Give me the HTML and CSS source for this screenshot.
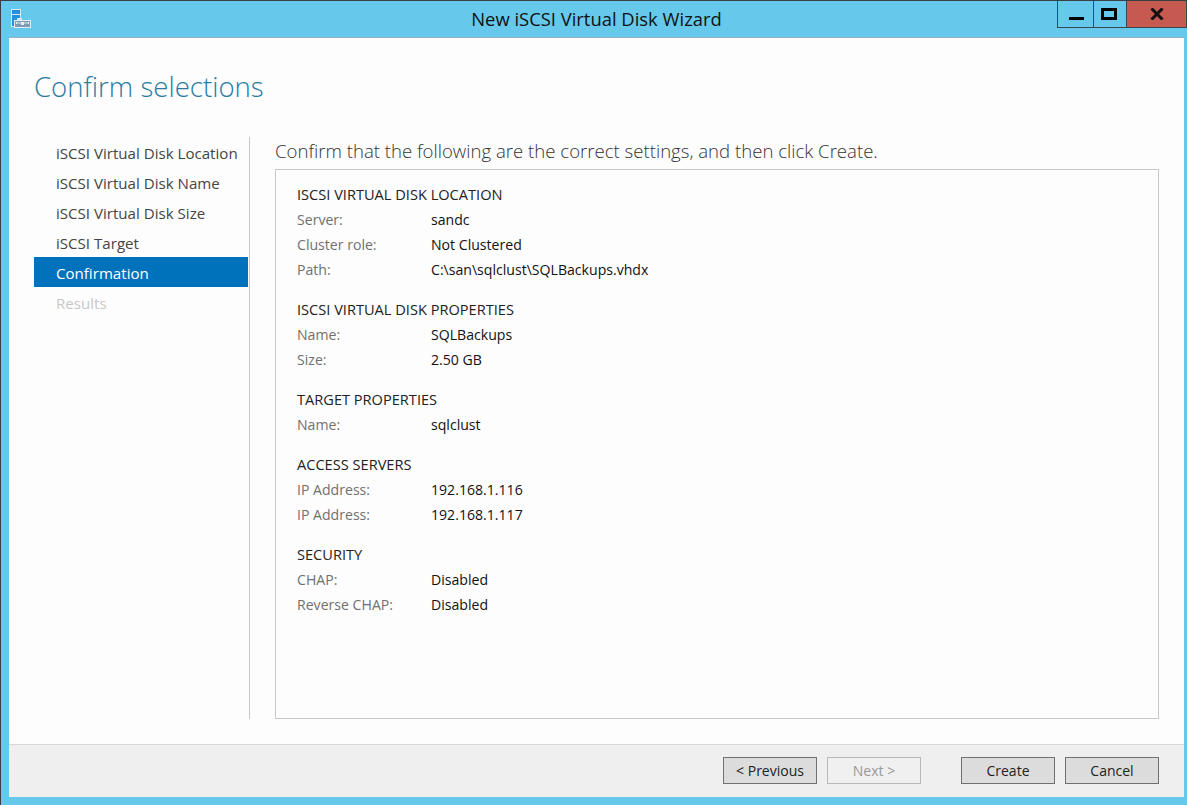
FILE: index.html
```html
<!DOCTYPE html>
<html lang="en">
<head>
<meta charset="utf-8">
<title>New iSCSI Virtual Disk Wizard</title>
<link rel="stylesheet" href="styles.css">
</head>
<body>
<div class="window">
  <header class="titlebar">
    <svg class="app-icon" width="20" height="20" viewBox="0 0 20 20">
      <rect x="0.5" y="0.5" width="9" height="17" fill="#2390dc" stroke="#d5e9f5"/>
      <rect x="1" y="5" width="8" height="1" fill="#d5e9f5"/>
      <rect x="6" y="9" width="5" height="2" fill="#d5e9f5"/>
      <rect x="3.5" y="11.5" width="16" height="7" fill="#7b9db5" stroke="#e4edf2"/>
      <rect x="5" y="13" width="13" height="2" fill="#aac2d2"/>
      <rect x="5" y="13" width="1" height="2" fill="#eef3f6"/>
      <rect x="17" y="13" width="1" height="2" fill="#eef3f6"/>
      <rect x="10" y="13" width="3" height="3" fill="#e8eef2"/>
    </svg>
    <div class="title">New iSCSI Virtual Disk Wizard</div>
    <div class="controls">
      <div class="ctl ctl-min"><span class="min-glyph"></span></div>
      <div class="ctl ctl-max"><span class="max-glyph"></span></div>
      <div class="ctl ctl-close">
        <svg width="14" height="12" viewBox="0 0 14 12"><path d="M1.5 0.5 L12.5 11.5 M12.5 0.5 L1.5 11.5" stroke="#111" stroke-width="3" fill="none"/></svg>
      </div>
    </div>
  </header>
  <main class="client">
    <div class="body">
      <h1 class="heading">Confirm selections</h1>
      <div class="columns">
        <nav class="steps">
          <div class="step">iSCSI Virtual Disk Location</div>
          <div class="step">iSCSI Virtual Disk Name</div>
          <div class="step">iSCSI Virtual Disk Size</div>
          <div class="step">iSCSI Target</div>
          <div class="step step-active">Confirmation</div>
          <div class="step step-disabled">Results</div>
        </nav>
        <section class="pane">
          <p class="lead">Confirm that the following are the correct settings, and then click Create.</p>
          <div class="summary">
            <div class="group">
              <div class="group-title">ISCSI VIRTUAL DISK LOCATION</div>
              <div class="row"><span class="key">Server:</span><span class="val">sandc</span></div>
              <div class="row"><span class="key">Cluster role:</span><span class="val">Not Clustered</span></div>
              <div class="row"><span class="key">Path:</span><span class="val">C:\san\sqlclust\SQLBackups.vhdx</span></div>
            </div>
            <div class="group">
              <div class="group-title">ISCSI VIRTUAL DISK PROPERTIES</div>
              <div class="row"><span class="key">Name:</span><span class="val">SQLBackups</span></div>
              <div class="row"><span class="key">Size:</span><span class="val">2.50 GB</span></div>
            </div>
            <div class="group">
              <div class="group-title">TARGET PROPERTIES</div>
              <div class="row"><span class="key">Name:</span><span class="val">sqlclust</span></div>
            </div>
            <div class="group">
              <div class="group-title">ACCESS SERVERS</div>
              <div class="row"><span class="key">IP Address:</span><span class="val">192.168.1.116</span></div>
              <div class="row"><span class="key">IP Address:</span><span class="val">192.168.1.117</span></div>
            </div>
            <div class="group">
              <div class="group-title">SECURITY</div>
              <div class="row"><span class="key">CHAP:</span><span class="val">Disabled</span></div>
              <div class="row"><span class="key">Reverse CHAP:</span><span class="val">Disabled</span></div>
            </div>
          </div>
        </section>
      </div>
    </div>
    <footer class="footer">
      <button class="btn">&lt; Previous</button>
      <button class="btn btn-disabled">Next &gt;</button>
      <button class="btn btn-create">Create</button>
      <button class="btn">Cancel</button>
    </footer>
  </main>
</div>
</body>
</html>
```

FILE: styles.css
```css
* { box-sizing: border-box; }
html, body { margin: 0; padding: 0; height: 100%; }
body { font-family: "Open Sans", "Noto Sans", sans-serif; overflow: hidden; }

.window {
  width: 1187px;
  height: 805px;
  background: #66c9ec;
  border-top: 1px solid #3a3f44;
  border-left: 1px solid #3a3f44;
  padding: 0 3px 8px 8px;
  display: flex;
  flex-direction: column;
}

.titlebar {
  height: 36px;
  display: flex;
  align-items: flex-start;
  flex: none;
  position: relative;
  margin-left: -8px;
  margin-right: -3px;
}
.app-icon { margin: 8px 0 0 10px; flex: none; }
.title {
  position: absolute;
  left: 5px;
  right: 0;
  top: 6px;
  text-align: center;
  font-size: 18.4px;
  line-height: 24px;
  color: #111;
}
.controls {
  margin-left: auto;
  margin-right: 0;
  display: flex;
  height: 27px;
  border: 1px solid #3a4a55;
  border-top: 0;
  position: relative;
}
.ctl { display: flex; align-items: center; justify-content: center; }
.ctl-min { width: 36px; border-right: 1px solid #3a4a55; }
.ctl-max { width: 33px; border-right: 1px solid #3a4a55; }
.ctl-close { width: 59px; background: #c75a50; }
.min-glyph { width: 15px; height: 3px; background: #000; margin: 8px 0 0 2px; }
.max-glyph { width: 16px; height: 12px; border: 3px solid #000; margin: -1px 2px 0 0; }

.client {
  flex: 1;
  min-height: 0;
  background: #fdfdfd;
  border-top: 1px solid #8fb3c4;
  display: flex;
  flex-direction: column;
}
.body { flex: 1; min-height: 0; padding: 0 25px 0 25px; }
.heading {
  margin: 0;
  padding-top: 28px;
  height: 99px;
  font-size: 27.6px;
  line-height: 40px;
  font-weight: 300;
  color: #2a7ba1;
}
.columns { display: flex; height: 582px; }
.steps {
  width: 216px;
  flex: none;
  border-right: 1px solid #c8c8c8;
  padding-right: 1px;
}
.step {
  height: 30px;
  line-height: 32px;
  padding-left: 22px;
  font-size: 15.1px;
  color: #444;
  white-space: nowrap;
}
.step-active { background: #0072bc; color: #fff; }
.step-disabled { color: #c8c8c8; }

.pane { flex: 1; padding-left: 25px; display: flex; flex-direction: column; min-width: 0; }
.lead {
  margin: 0;
  height: 32px;
  font-size: 18.6px;
  line-height: 28px;
  font-weight: 300;
  color: #333;
  white-space: nowrap;
}
.summary {
  flex: 1;
  border: 1px solid #c8c8c8;
  padding: 12px 21px 0;
}
.group { margin-bottom: 15px; }
.group-title, .row { height: 25px; line-height: 25px; white-space: nowrap; }
.group-title { font-size: 14.6px; color: #222; }
.row { display: flex; font-size: 14.1px; }
.key { width: 134px; flex: none; color: #707070; }
.val { color: #111; }

.footer {
  flex: none;
  height: 53px;
  background: #efefef;
  border-top: 1px solid #d8d8d8;
  display: flex;
  align-items: flex-start;
  padding: 12px 25px 0 0;
  justify-content: flex-end;
  gap: 10px;
}
.btn {
  width: 94px;
  height: 27px;
  padding: 0;
  background: #dcdcdc;
  border: 1px solid #707070;
  font-family: inherit;
  font-size: 14px;
  color: #222;
}
.btn-disabled { background: #f0f0f0; border-color: #b8b8b8; color: #999; }
.btn-create { margin-left: 30px; }
```
